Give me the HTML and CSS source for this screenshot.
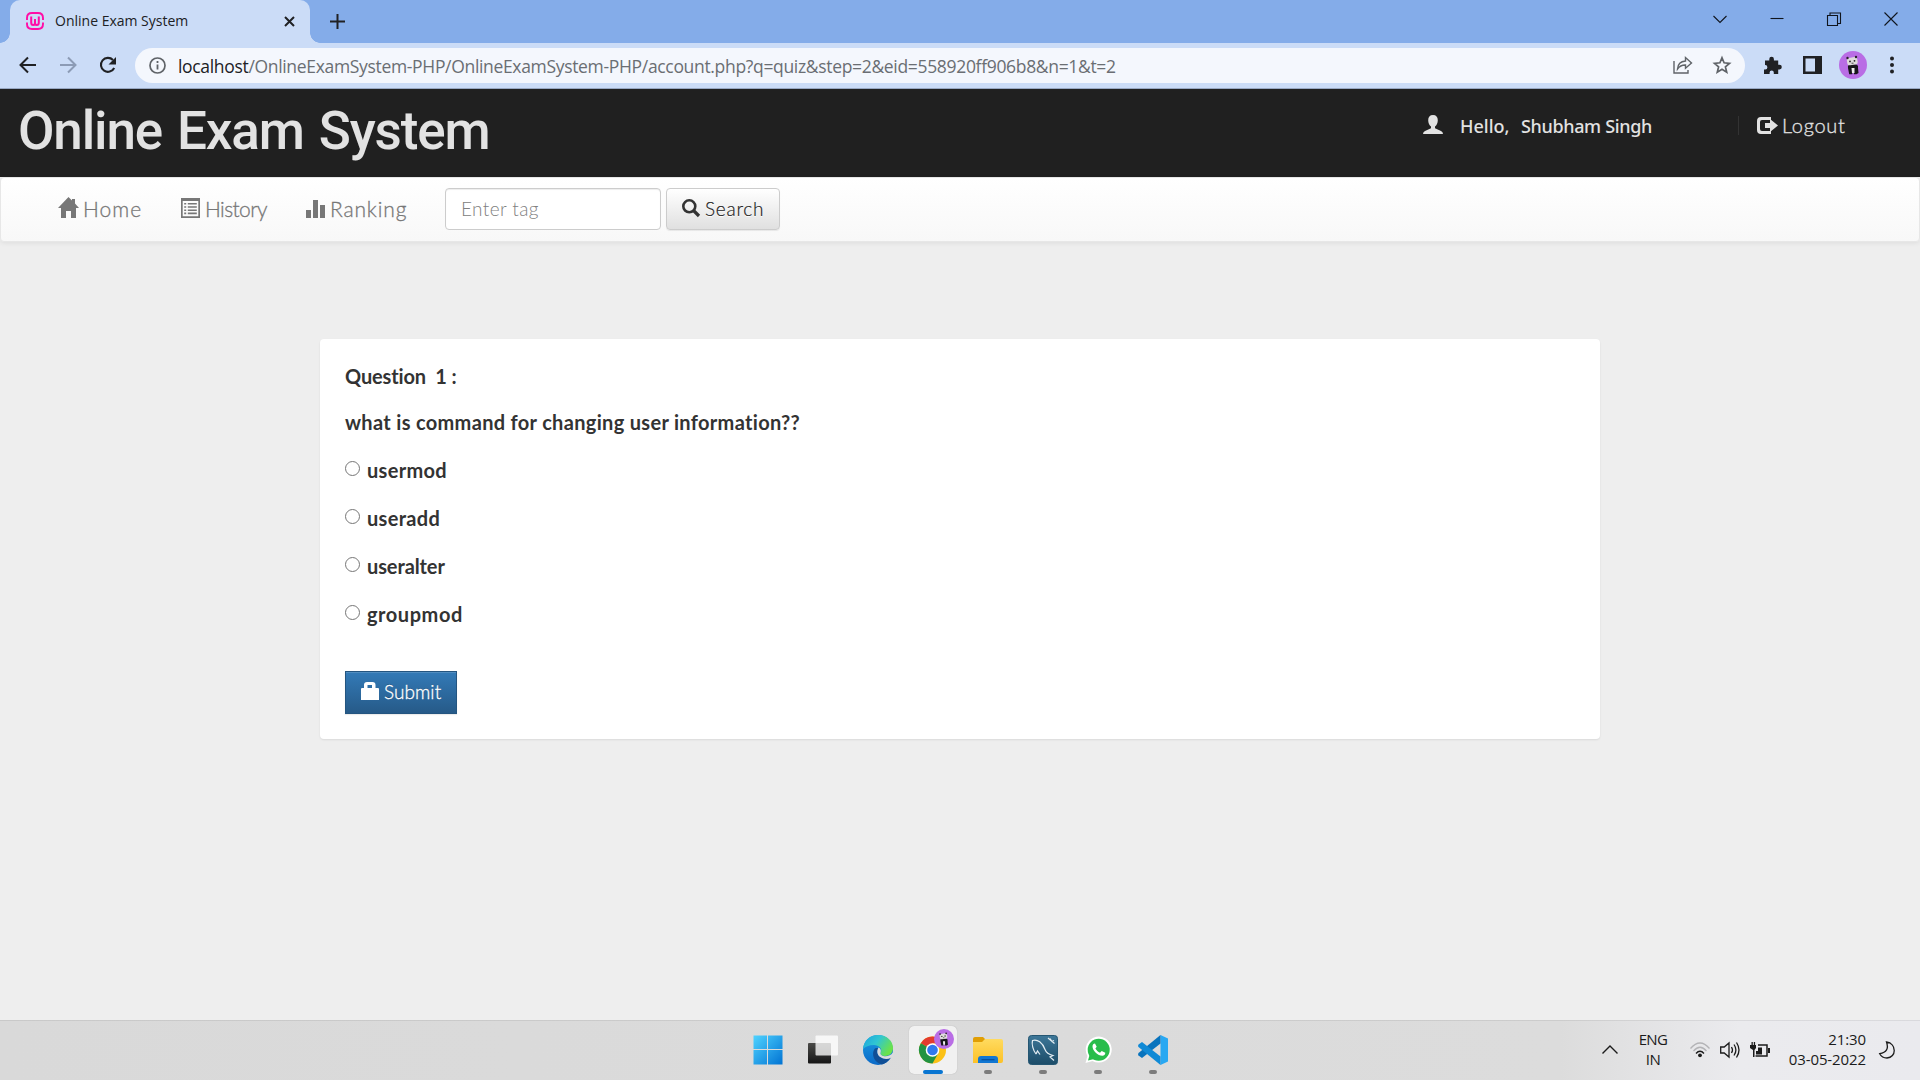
FILE: index.html
```
<!DOCTYPE html>
<html lang="en">
<head>
<meta charset="utf-8">
<title>Online Exam System</title>
<link rel="stylesheet" href="styles.css">
</head>
<body>
<svg class="defs" width="0" height="0">
  <defs>
    <linearGradient id="winG" x1="0" y1="0" x2="1" y2="1"><stop offset="0" stop-color="#4fd3ff"/><stop offset="1" stop-color="#0173d3"/></linearGradient>
    <linearGradient id="darkG" x1="0" y1="0" x2="0" y2="1"><stop offset="0" stop-color="#4a4a48"/><stop offset="1" stop-color="#161616"/></linearGradient>
    <linearGradient id="edgeTop" x1="0" y1="0" x2="1" y2=".5"><stop offset="0" stop-color="#1ba2df"/><stop offset=".5" stop-color="#30c6d2"/><stop offset="1" stop-color="#6be24a"/></linearGradient>
    <linearGradient id="edgeLow" x1="0" y1="0" x2="0" y2="1"><stop offset="0" stop-color="#1b9de2"/><stop offset="1" stop-color="#0b69c7"/></linearGradient>
    <linearGradient id="foldG" x1="0" y1="0" x2="0" y2="1"><stop offset="0" stop-color="#ffdb60"/><stop offset="1" stop-color="#fcc127"/></linearGradient>
    <linearGradient id="sqlG" x1="0" y1="0" x2="0" y2="1"><stop offset="0" stop-color="#3d7798"/><stop offset="1" stop-color="#1c4c68"/></linearGradient>
    <symbol id="panda" viewBox="0 0 28 28">
      <circle cx="14" cy="14" r="14" fill="#b96de5"/>
      <path d="M9 17q-1-4 5-4t5 4l.5 5-2 1.200h-2.500l-.3-4h-1l-.5 4h-3z" fill="#17161a"/>
      <path d="M12.500 17h3v5h-2.500z" fill="#eee"/>
      <rect x="8" y="6.500" width="10.500" height="7.500" rx="2.500" fill="#dedbdb" transform="rotate(-8 13 10)"/>
      <circle cx="8.500" cy="7" r="1.200" fill="#29202c"/><circle cx="17" cy="6" r="1.200" fill="#29202c"/>
      <circle cx="11" cy="10.400" r=".9" fill="#222"/><circle cx="15.500" cy="9.800" r=".9" fill="#222"/><path d="M12.500 12.200h2" stroke="#222" stroke-width=".8"/>
    </symbol>
  </defs>
</svg>

<header class="tabstrip">
  <div class="tab">
    <svg class="favicon" viewBox="0 0 18 18" fill="none" stroke="#ff0da6" stroke-width="1.900"><path d="M1 8V6q0-5 5-5h6q5 0 5 5v2M1 10.500V12q0 5 5 5h6q5 0 5-5v-1.500"/><path d="M5.200 4.500v6q0 2.500 2 2.500Q9 13 9 11q0 2 1.800 2 2 0 2-2.500v-6M9 7v4" stroke-width="2"/></svg>
    <span class="tab-title">Online Exam System</span>
    <svg class="tab-close" viewBox="0 0 11 11"><path d="M1 1l9 9M10 1l-9 9" stroke="#202124" stroke-width="2"/></svg>
  </div>
  <svg class="new-tab" viewBox="0 0 15 15"><path d="M7.500 0v15M0 7.500h15" stroke="#202124" stroke-width="2"/></svg>
  <div class="window-controls">
    <svg viewBox="0 0 14 14"><path d="M.5 4l6.500 6.500L13.500 4"/></svg>
    <svg viewBox="0 0 14 14"><path d="M.5 6.500h13"/></svg>
    <svg viewBox="0 0 14 14"><path d="M.5 3.500h10v10H.5zM3 3V1h10.500v10.500H11"/></svg>
    <svg viewBox="0 0 14 14"><path d="M.5.500l13 13M13.500.500l-13 13"/></svg>
  </div>
</header>

<div class="toolbar">
  <svg class="tool back" viewBox="0 0 18 18"><path d="M17 9H2.500M9 1.500L1.500 9 9 16.500" fill="none" stroke="#202124" stroke-width="2"/></svg>
  <svg class="tool forward" viewBox="0 0 18 18"><path d="M1 9h14.500M9 1.500L16.500 9 9 16.500" fill="none" stroke="#8c9bb5" stroke-width="2"/></svg>
  <svg class="tool reload" viewBox="0 0 18 18"><path d="M15.200 12A7 7 0 1 1 14 4" fill="none" stroke="#202124" stroke-width="2.100"/><path d="M17 1v7.500H9.500z" fill="#202124"/></svg>
  <div class="omnibox">
    <svg class="info" viewBox="0 0 17 17"><circle cx="8.500" cy="8.500" r="7.500" fill="none" stroke="#5f6368" stroke-width="1.700"/><path d="M8.500 7.500v5M8.500 4v1.900" stroke="#5f6368" stroke-width="1.800"/></svg>
    <div class="url"><span class="host">localhost</span>/OnlineExamSystem-PHP/OnlineExamSystem-PHP/account.php?q=quiz&amp;step=2&amp;eid=558920ff906b8&amp;n=1&amp;t=2</div>
    <svg class="share" viewBox="0 0 20 18" fill="none" stroke="#5f6368" stroke-width="1.400"><path d="M1 5v12h14v-3"/><path d="M4.500 13Q5 5.500 12.500 5V1.500L18.500 7l-6 5.200V9Q7.500 8.800 4.500 13z"/></svg>
    <svg class="star" viewBox="0 0 18 18"><path d="M9 1.800l2.100 5 5.400.5-4.100 3.500 1.300 5.400L9 13.300l-4.700 2.900 1.300-5.400-4.100-3.500 5.400-.5z" fill="none" stroke="#5f6368" stroke-width="1.700"/></svg>
  </div>
  <svg class="ext" viewBox="0 0 18 18"><path d="M1 4.500h4.300V3a2.300 2.300 0 0 1 4.600 0v1.500h4.300v4.300h1.300a2.300 2.300 0 0 1 0 4.600h-1.300V18H9.800v-1.500a2.100 2.100 0 0 0-4.200 0V18H0v-4.500h1.200a2.200 2.200 0 0 0 0-4.400H1z" fill="#202124"/></svg>
  <svg class="panel" viewBox="0 0 19 18"><path fill-rule="evenodd" d="M0 0h19v18H0zM2.500 2.500v13h9.500v-13z" fill="#202124"/></svg>
  <svg class="avatar"><use href="#panda"/></svg>
  <svg class="dots" viewBox="0 0 4 18" fill="#202124"><circle cx="2" cy="2.500" r="2"/><circle cx="2" cy="9" r="2"/><circle cx="2" cy="15.500" r="2"/></svg>
</div>

<section class="site-header">
  <h1 class="logo">Online Exam System</h1>
  <div class="account">
    <svg class="user-icon" viewBox="0 0 20 19"><path d="M10 0C6.800 0 5.200 2 5.200 5.200c0 3 1.200 5 2.800 6.300v1.800L2 16q-2 .8-2 3h20q0-2.200-2-3l-6-2.700v-1.800c1.600-1.300 2.800-3.300 2.800-6.300C14.800 2 13.200 0 10 0z" fill="#e2e2e2"/></svg>
    <span class="hello">Hello,</span>
    <a class="username">Shubham Singh</a>
    <span class="divider"></span>
    <svg class="logout-icon" viewBox="0 0 21 17" fill="#e2e2e2"><path d="M14 0H4Q0 0 0 4v9q0 4 4 4h10v-3H5q-2 0-2-2V5q0-2 2-2h9z"/><path d="M8 6h5V2l8 6.500-8 6.500v-4H8z"/></svg>
    <a class="logout">Logout</a>
  </div>
</section>

<nav class="navbar">
  <a class="nav-item home"><svg viewBox="0 0 21 21"><path d="M10.500 0l3.500 3.500V2h3v4.500l4 4.500h-3v10h-5v-7H8v7H3V11H0z"/></svg><span>Home</span></a>
  <a class="nav-item history"><svg viewBox="0 0 19 20"><path fill-rule="evenodd" d="M0 0h19v20H0zM1.700 3v15.300h15.600V3z"/><path d="M3.200 5h2v1.600h-2zM6.800 5h9v1.600h-9zM3.200 8.200h2v1.600h-2zM6.800 8.200h9v1.600h-9zM3.200 11.400h2V13h-2zM6.800 11.400h9V13h-9zM3.200 14.600h2v1.600h-2zM6.800 14.600h9v1.600h-9z"/></svg><span>History</span></a>
  <a class="nav-item ranking"><svg viewBox="0 0 19 18"><path d="M0 10h5v8H0zM7 0h5v18H7zM14 5h5v13h-5z"/></svg><span>Ranking</span></a>
  <form class="search">
    <input class="tag-input" type="text" placeholder="Enter tag">
    <button class="search-btn" type="button"><svg viewBox="0 0 18 18"><circle cx="7.300" cy="7.300" r="6" fill="none" stroke="#333" stroke-width="2.600"/><path d="M11.500 11.500l5.500 5.500" stroke="#333" stroke-width="3.200"/></svg><span>Search</span></button>
  </form>
</nav>

<main class="content">
  <form class="card">
    <p class="heading">Question&nbsp; 1 :</p>
    <p class="question">what is command for changing user information??</p>
    <label class="option"><input type="radio" name="ans"><span>usermod</span></label>
    <label class="option"><input type="radio" name="ans"><span>useradd</span></label>
    <label class="option"><input type="radio" name="ans"><span class="tight">useralter</span></label>
    <label class="option"><input type="radio" name="ans"><span class="wide">groupmod</span></label>
    <button class="submit" type="button"><svg viewBox="0 0 18 18"><path fill-rule="evenodd" d="M3 6V3q0-3 3-3h5.500q3 0 3 3v3H17q1 0 1 1v11H0V7q0-1 1-1zM6.500 6H11V3H6.500z" fill="#fff"/></svg><span>Submit</span></button>
  </form>
</main>

<footer class="taskbar">
  <div class="side"></div>
  <div class="apps">
    <div class="app"><svg viewBox="0 0 30 30"><path d="M.5.500H14V14H.5zM15 .5h14.500V14H15zM.5 15H14v14.500H.5zM15 15h14.500v14.500H15z" fill="url(#winG)"/></svg></div>
    <div class="app"><svg viewBox="0 0 30 30"><rect y="8" width="23" height="20.500" rx="1" fill="url(#darkG)"/><rect x="7.500" y=".5" width="22.500" height="20" rx="1" fill="#fff" fill-opacity=".78"/></svg></div>
    <div class="app"><svg viewBox="0 0 30 30"><circle cx="15" cy="15" r="15" fill="url(#edgeLow)"/><path d="M0 14C1 5 7 0 15 0c9 0 15 6 15 13 0 5-3.500 8-8 8-3 0-5-1.500-4.500-3C20 14 16 10 11 10 6 10 2 12 0 14z" fill="url(#edgeTop)"/><path d="M11.500 14C8 19 11 28 19 29.400c4-1 7.500-4 8.800-7.400-5 3-13 1-13.500-5 0-2 1.200-3.500 1.200-3.500S13 12 11.500 14z" fill="#104f96"/><path d="M15.500 12.500c3 1 2.500 4.500 2 5.500-.5 1.800 2 3.300 4.800 3.300 3.300 0 5.700-1.300 7.700-3.800v4.500l-2 .7c-5 2.800-13.200.5-13.700-5.700 0-2 .6-3.400 1.200-4.500z" fill="#dcdcdc"/></svg></div>
    <div class="app active"><svg viewBox="0 0 30 30"><circle cx="14.500" cy="15" r="13.500" fill="#fbc116"/><path d="M14.500 15L2.800 8.200A13.500 13.500 0 0 1 26.200 8.200H14.500z" fill="#e33b2e"/><path d="M14.500 15L2.800 8.200A13.500 13.500 0 0 0 14.500 28.500L20.400 18z" fill="#229342"/><circle cx="14.500" cy="15" r="6.800" fill="#fff"/><circle cx="14.500" cy="15" r="5.300" fill="#3079ee"/></svg><svg class="badge"><use href="#panda"/></svg></div>
    <div class="app running"><svg viewBox="0 0 30 30"><path d="M0 4q0-2 2-2h8l3 3v5H0z" fill="#e09e05"/><path d="M0 7h9l3-3h16q2 0 2 2v20q0 2-2 2H0z" fill="url(#foldG)"/><path d="M5 28v-4q0-3 3-3h14q3 0 3 3v4z" fill="#1277d2"/><path d="M8.500 24.700h13" stroke="#084f99" stroke-width="1.200"/></svg></div>
    <div class="app running"><svg viewBox="0 0 30 30"><rect x=".5" y=".5" width="29" height="29" rx="3" fill="url(#sqlG)" stroke="#255672"/><path d="M8 19C5 15 3.500 9 4.500 5.500c5-1.500 10 2 12.500 9 1.500 4 4 5 8 6l-3 1.500 4 3.500M8 19l1.500-3 2.500 3.500M20 3l6.500 5.500M22 3.500l2 3 2-1" fill="none" stroke="#e3edf3" stroke-width="1.200"/></svg></div>
    <div class="app running"><svg viewBox="0 0 30 30"><path d="M2.500 28l1.900-7A13 13 0 1 1 9.500 26z" fill="#fff"/><circle cx="15.700" cy="14.700" r="11" fill="#28bd4b"/><path d="M5 25.500l1.700-6 4.500 4.500z" fill="#28bd4b"/><path d="M12 8.500c-1.500 0-2.500 1.300-2.500 3 0 4 5.500 9.300 9.800 9.300 1.700 0 3-1.300 3-3l-3.600-1.900-1.700 1.900c-2-.8-3.600-2.400-4.600-4.300l1.300-1.700z" fill="#fff"/></svg></div>
    <div class="app running"><svg viewBox="0 0 30 30"><path d="M22.500 0L30 3.500v23L22.500 30z" fill="#29a8f2"/><path d="M22.500 0v8.500L4 23 .5 20.500Q-.5 19 .5 18z" fill="#0873bd"/><path d="M22.500 30v-8.500L4 7 .5 9.500Q-.5 11 .5 12z" fill="#108ad6"/></svg></div>
  </div>
  <div class="tray">
    <svg class="chev" viewBox="0 0 16 9"><path d="M.5 8.500L8 1l7.500 7.500" fill="none" stroke="#1b1b1b" stroke-width="1.400"/></svg>
    <div class="lang">ENG<br>IN</div>
    <svg class="wifi" viewBox="0 0 20 16" fill="none" stroke-width="1.300"><path d="M.5 6.500q9.500-11 19 0M3.500 9q6.500-7.500 13 0" stroke="#b3b3b6"/><path d="M6 11.500q4-4.500 8 0" stroke="#1b1b1b"/><circle cx="10" cy="13.300" r="1.900" fill="#1b1b1b"/></svg>
    <svg class="vol" viewBox="0 0 20 18" fill="none" stroke="#1b1b1b" stroke-width="1.300"><path d="M.7 6h3.500L9 2v14l-4.800-4H.7zM11.500 6q2 3 0 6M14 3.500q3.800 5.500 0 11M16.500 1.500q5 7.500 0 15"/></svg>
    <svg class="bat" viewBox="0 0 20 15"><path d="M1.500 0h1.300v3h1V0h1.300v3H6v3L4.500 8v7H3V8L0 6V3h1.500zM6 12.500V9h2V5.500h4v7z" fill="#1b1b1b"/><path d="M8 3h9v11H5.500" fill="none" stroke="#1b1b1b" stroke-width="1.500"/><path d="M18 6h2v5h-2z" fill="#1b1b1b"/></svg>
    <div class="clock">21:30<br>03-05-2022</div>
    <svg class="moon" viewBox="0 0 16 18"><path d="M7.500 1C18 2.500 17.500 16.500 8 17q-5 0-7.300-4.300Q11 11 7.500 1z" fill="none" stroke="#1b1b1b" stroke-width="1.300"/></svg>
  </div>
</footer>
</body>
</html>
```
FILE: styles.css
```
* { box-sizing: border-box; }
body {
  margin: 0;
  width: 1920px;
  height: 1080px;
  overflow: hidden;
  display: flex;
  flex-direction: column;
  background: #eee;
  font-family: Lato, sans-serif;
}
.defs { position: absolute; }
svg { display: block; flex: none; overflow: visible; }

/* Browser chrome */
.tabstrip {
  height: 43px;
  display: flex;
  align-items: center;
  background: #84ace9;
  padding-left: 10px;
  font-family: "Open Sans", sans-serif;
}
.tab {
  position: relative;
  width: 300px;
  height: 43px;
  display: flex;
  align-items: center;
  background: #cbdcf7;
  border-radius: 10px 10px 0 0;
  padding: 0 15px 1px 16px;
}
.tab::before, .tab::after {
  content: "";
  position: absolute;
  bottom: 0;
  width: 10px;
  height: 10px;
}
.tab::before { left: -10px; background: radial-gradient(circle at 0 0, #84ace9 9.500px, #cbdcf7 10px); }
.tab::after { right: -10px; background: radial-gradient(circle at 100% 0, #84ace9 9.500px, #cbdcf7 10px); }
.favicon { width: 18px; height: 18px; }
.tab-title { margin-left: 11px; flex: 1; font-size: 14px; line-height: 20px; color: #202124; white-space: nowrap; }
.tab-close { width: 11px; height: 11px; }
.new-tab { width: 15px; height: 15px; margin-left: 20px; }
.window-controls { margin-left: auto; display: flex; gap: 43px; padding: 0 22px 5px 0; }
.window-controls svg { width: 14px; height: 14px; fill: none; stroke: #10151d; stroke-width: 1.100; }

.toolbar {
  height: 46px;
  display: flex;
  align-items: center;
  background: #cbdcf7;
  border-bottom: 1px solid #98a8c3;
  padding: 0 26px 1px 19px;
}
.tool { width: 18px; height: 18px; }
.forward { margin-left: 22px; }
.reload { margin-left: 22px; }
.omnibox {
  width: 1610px;
  height: 35px;
  margin-left: 18px;
  display: flex;
  align-items: center;
  background: #f4f7fd;
  border-radius: 18px;
  padding: 0 14px;
}
.info { width: 17px; height: 17px; }
.url {
  flex: 1;
  margin-left: 12px;
  padding-top: 1px;
  font: 17.500px/24px "Open Sans", sans-serif;
  letter-spacing: -0.325px;
  color: #6a6e73;
  white-space: nowrap;
}
.host { color: #202124; }
.share { width: 20px; height: 18px; margin-right: 20px; }
.star { width: 18px; height: 18px; }
.ext { width: 18px; height: 18px; margin-left: 19px; }
.panel { width: 19px; height: 18px; margin-left: 21px; }
.avatar { width: 28px; height: 28px; margin-left: 17px; }
.dots { width: 4px; height: 18px; margin-left: auto; }

/* Site header */
.site-header {
  height: 88px;
  display: flex;
  justify-content: space-between;
  background: #202020;
  color: #e2e2e2;
  padding: 0 75px 0 18px;
}
.logo {
  margin: 11px 0 0;
  font: 500 53px/62px Roboto, sans-serif;
  letter-spacing: -1.150px;
  word-spacing: 3px;
  white-space: nowrap;
}
.account { display: flex; align-items: center; height: 73px; font: 500 18px/26px "Noto Sans", sans-serif; white-space: nowrap; }
.user-icon { width: 20px; height: 19px; margin: -3px 17px 0 -2px; }
.hello { width: 61px; }
.username { width: 217px; letter-spacing: -0.350px; }
.divider { width: 1px; height: 19px; background: #333; margin-right: 18px; }
.logout-icon { width: 21px; height: 17px; margin: 0 4px 0 0; }
.logout { width: 63px; font: 300 20px/26px Lato, sans-serif; letter-spacing: 0.700px; -webkit-text-stroke: 0.300px #e2e2e2; padding-bottom: 1px; }

/* Navigation */
.navbar {
  height: 65px;
  display: flex;
  align-items: center;
  background: linear-gradient(#fff, #f8f8f8);
  border: 1px solid #e7e7e7;
  border-radius: 4px;
  box-shadow: inset 0 1px 0 rgba(255,255,255,.15), 0 1px 5px rgba(0,0,0,.075);
  padding-left: 57px;
  color: #777;
}
.nav-item { display: flex; align-items: flex-end; height: 26px; font: 300 21px/26px Lato, sans-serif; }
.nav-item svg { fill: #777; margin-bottom: 5px; }
.nav-item span { white-space: nowrap; margin-bottom: 1px; -webkit-text-stroke: 0.300px #777; }
.home { width: 123px; letter-spacing: 1px; }
.home svg { width: 21px; height: 21px; margin-right: 4px; }
.history { width: 125px; letter-spacing: -0.600px; }
.history svg { width: 19px; height: 20px; margin-right: 5px; }
.ranking { width: 139px; letter-spacing: 0.850px; }
.ranking svg { width: 19px; height: 18px; margin-right: 5px; }
.search { display: flex; gap: 5px; padding-bottom: 1px; }
.tag-input {
  width: 216px;
  height: 42px;
  border: 1px solid #ccc;
  border-radius: 4px;
  background: #fff;
  box-shadow: inset 0 1px 1px rgba(0,0,0,.075);
  padding: 0 15px 2px;
  font: 300 19px Lato, sans-serif;
  letter-spacing: 0.400px;
}
.tag-input::placeholder { color: #808080; }
.search-btn {
  width: 114px;
  height: 42px;
  display: flex;
  align-items: center;
  border: 1px solid #ccc;
  border-radius: 4px;
  background: linear-gradient(#fff, #e0e0e0);
  box-shadow: inset 0 1px 0 rgba(255,255,255,.15), 0 1px 1px rgba(0,0,0,.075);
  padding: 0 15px;
  font: 300 19px/24px Lato, sans-serif;
  letter-spacing: 0.750px;
  color: #222;
  -webkit-text-stroke: 0.200px #222;
  text-shadow: 0 1px 0 #fff;
}
.search-btn svg { width: 18px; height: 18px; margin: -2px 5px 0 0; }

/* Question card */
.content { flex: 1; display: flex; justify-content: center; align-items: flex-start; padding-top: 97px; }
.card {
  width: 1280px;
  height: 400px;
  background: #fff;
  border-radius: 4px;
  box-shadow: 0 1px 2px rgba(0,0,0,.09);
  padding: 24px 25px 25px;
  color: #333;
  font: 700 20px/26px Lato, sans-serif;
  letter-spacing: 0.320px;
}
.heading { margin: 0 0 20px; letter-spacing: -0.150px; }
.question { margin: 0 0 18px; }
.option { height: 48px; display: flex; align-items: center; gap: 7px; padding-bottom: 15px; }
.option input { width: 15px; height: 15px; margin: -3px 0 0; appearance: none; border: 1px solid #767676; border-radius: 50%; background: #fff; }
.tight { letter-spacing: -0.100px; }
.wide { letter-spacing: 0.550px; }
.submit {
  width: 112px;
  height: 43px;
  margin-top: 26px;
  display: flex;
  align-items: center;
  border: 1px solid #245580;
  background: linear-gradient(#337ab7, #265a88);
  box-shadow: inset 0 1px 0 rgba(255,255,255,.15), 0 1px 1px rgba(0,0,0,.075);
  padding: 0 0 1px 15px;
  color: #fff;
  font: 300 19px/24px Lato, sans-serif;
  letter-spacing: 0.050px;
  -webkit-text-stroke: 0.300px #fff;
  text-shadow: 0 -1px 0 rgba(0,0,0,.2);
}
.submit svg { width: 18px; height: 18px; margin: -2px 5px 0 0; }

/* Taskbar */
.taskbar {
  height: 60px;
  display: flex;
  align-items: center;
  background: linear-gradient(90deg, #d9d9d9 0, #dcdcdc 1560px, #ebebee 1740px, #eaeaee 100%);
  box-shadow: inset 0 1px 0 rgba(0,0,0,.07);
}
.side { width: 744px; }
.apps { display: flex; gap: 7px; }
.app {
  position: relative;
  width: 48px;
  height: 48px;
  display: flex;
  justify-content: center;
  align-items: center;
  border-radius: 5px;
}
.app > svg { width: 30px; height: 30px; }
.active { background: #f1f1f1; box-shadow: 0 0 1px rgba(0,0,0,.25); }
.app .badge { position: absolute; width: 20px; height: 20px; top: 3px; left: 25px; }
.active::after, .running::after {
  content: "";
  position: absolute;
  left: 20px;
  bottom: 0;
  width: 8px;
  height: 4px;
  border-radius: 2px;
  background: #7c7c7c;
}
.active::after { left: 14px; width: 20px; background: #0975d1; }
.tray {
  flex: 1;
  display: flex;
  justify-content: flex-end;
  align-items: center;
  padding: 0 25px 1px 0;
  font: 15px/20px "Open Sans", sans-serif;
  color: #1b1b1b;
}
.chev { width: 16px; height: 9px; margin-right: 20px; }
.lang { width: 30px; text-align: center; letter-spacing: -0.600px; margin-right: 22px; padding-bottom: 1px; }
.wifi { width: 20px; height: 16px; margin-right: 10px; }
.vol { width: 20px; height: 18px; margin-right: 10px; }
.bat { width: 20px; height: 15px; margin-right: 18px; }
.clock { width: 78px; text-align: right; letter-spacing: -0.100px; margin-right: 13px; padding-bottom: 2px; }
.moon { width: 16px; height: 18px; }
```
